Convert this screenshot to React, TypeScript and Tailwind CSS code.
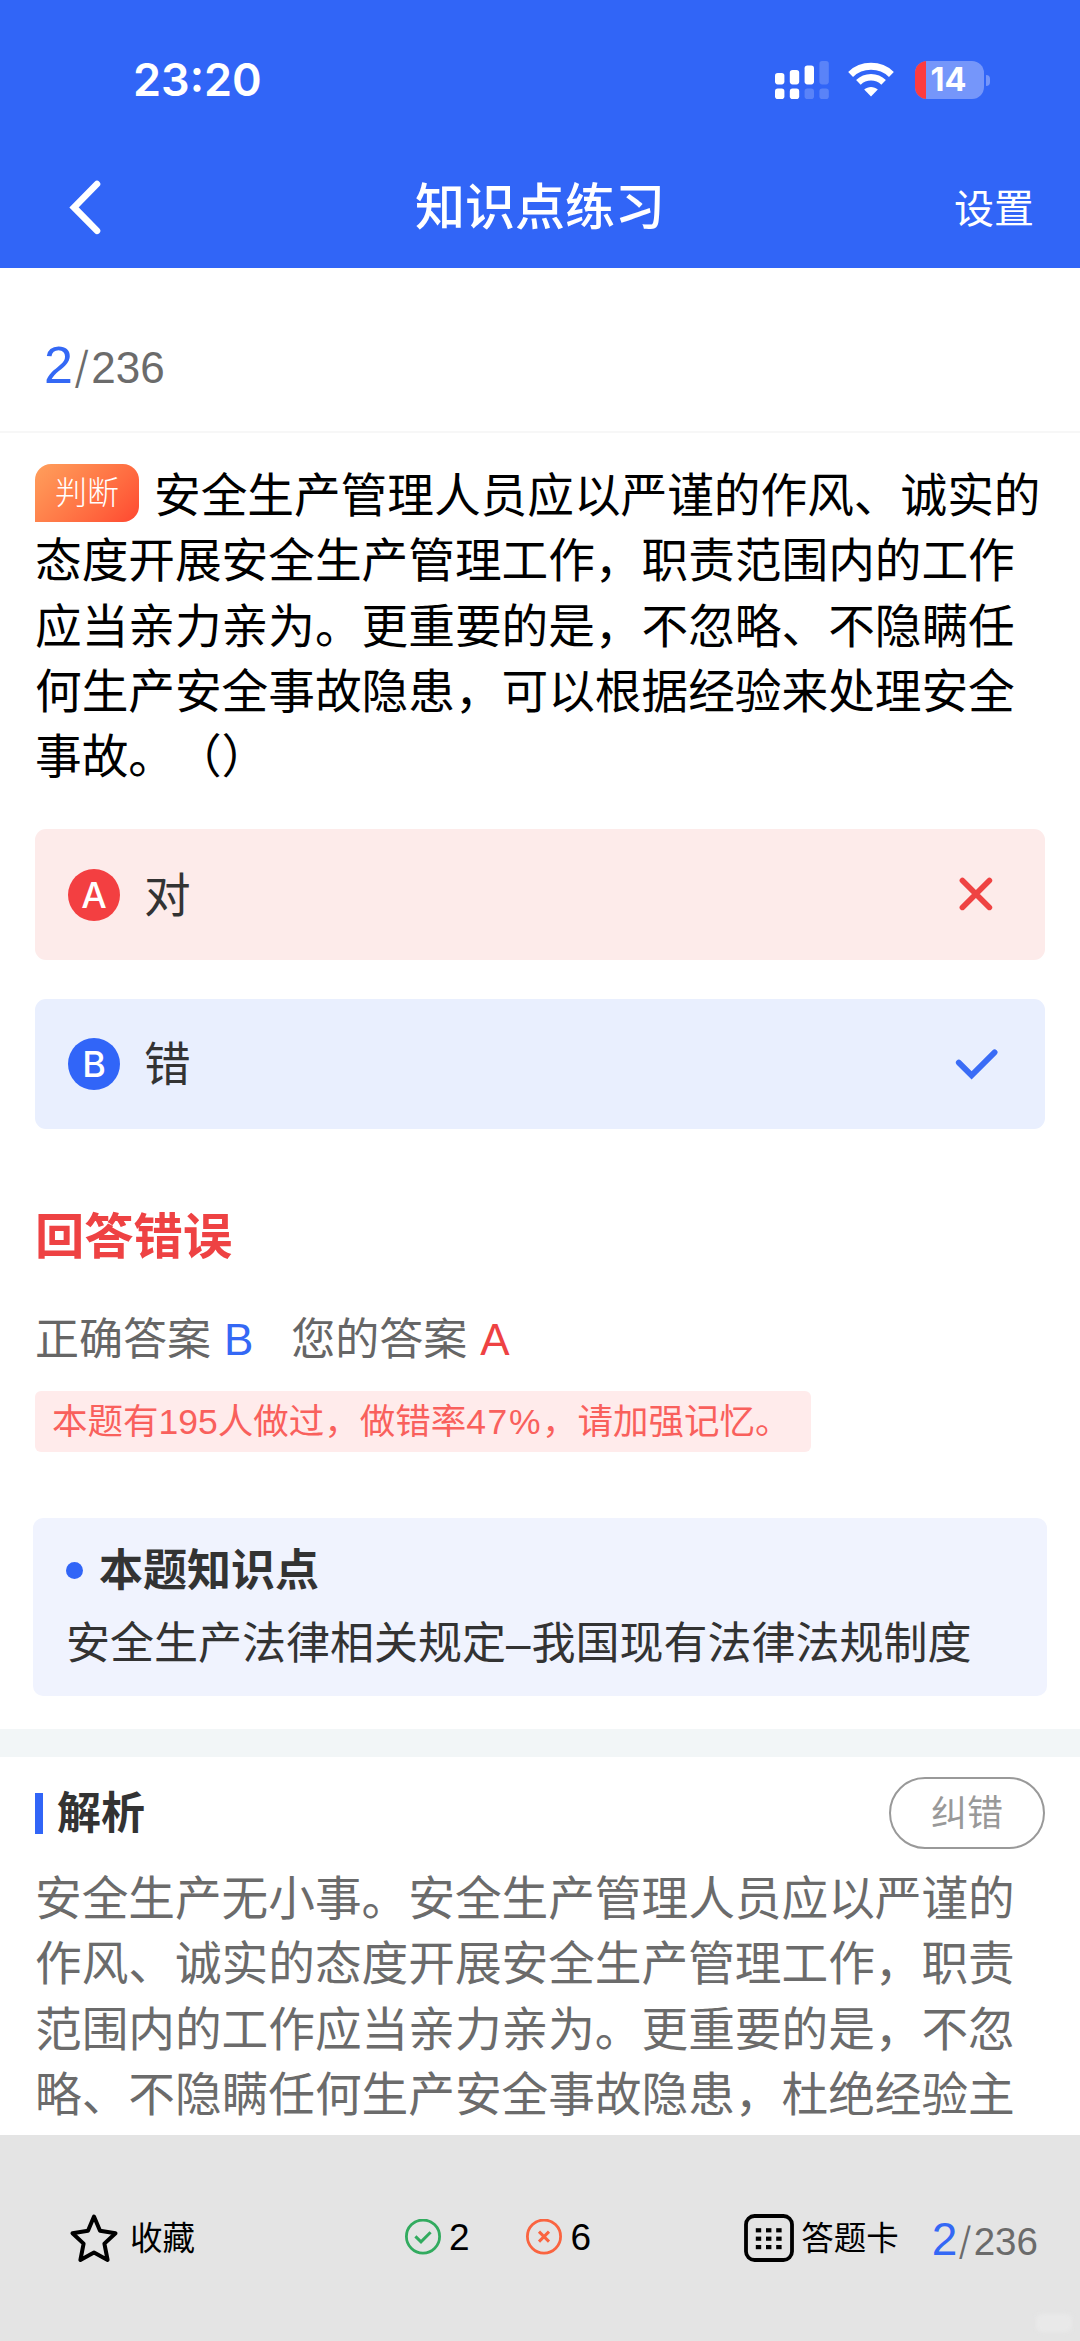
import React from "react";

function SignalIcon() {
  return (
    <svg width="54" height="40" viewBox="0 0 54 40" fill="#fff">
      <rect x="0" y="13" width="9.4" height="11.4" rx="2.8" />
      <rect x="14.8" y="10" width="9.4" height="14.4" rx="2.8" />
      <rect x="29.6" y="5.6" width="9.4" height="18.8" rx="2.8" />
      <rect x="44.4" y="1" width="9.4" height="23.4" rx="2.8" opacity=".2" />
      <rect x="0" y="28.6" width="9.4" height="10.4" rx="2.8" />
      <rect x="14.8" y="28.6" width="9.4" height="10.4" rx="2.8" />
      <rect x="29.6" y="28.6" width="9.4" height="10.4" rx="2.8" opacity=".2" />
      <rect x="44.4" y="28.6" width="9.4" height="10.4" rx="2.8" opacity=".2" />
    </svg>
  );
}

function WifiIcon() {
  return (
    <svg width="46" height="36" viewBox="0 0 46 36" fill="none">
      <path d="M2.6 12.4C13.8 1.6 32.2 1.6 43.4 12.4" stroke="#fff" strokeWidth="7" />
      <path d="M10.4 20.4C17.4 13.6 28.6 13.6 35.6 20.4" stroke="#fff" strokeWidth="6.6" />
      <path d="M16.2 27.6C20 24 26 24 29.8 27.6L23 34.6Z" fill="#fff" />
    </svg>
  );
}

function Battery() {
  return (
    <div className="flex items-center">
      <div className="flex h-[38px] w-[69px] overflow-hidden rounded-[12px] bg-[#7596fa]">
        <div className="h-full w-[11px] bg-[#fd3b3f]" />
        <span className="w-[45px] text-center font-[Inter] text-[32.5px] leading-[38px] font-bold text-white">
          14
        </span>
      </div>
      <div className="ml-[2px] h-[11px] w-[4px] rounded-r-full bg-[#7596fa]" />
    </div>
  );
}

type OptionProps = { letter: string; text: string; correct: boolean };

function Option({ letter, text, correct }: OptionProps) {
  return (
    <div
      className={
        correct
          ? "flex h-[130px] items-center rounded-[11px] bg-[#e9effe] pl-[33px]"
          : "flex h-[131px] items-center rounded-[11px] bg-[#fdebea] pl-[33px]"
      }
    >
      <span
        className={
          correct
            ? "flex size-[52px] items-center justify-center rounded-full bg-[#3165f8] font-[Inter] text-[36px] font-medium text-white"
            : "flex size-[52px] items-center justify-center rounded-full bg-[#f33f41] font-[Inter] text-[36px] font-medium text-white"
        }
      >
        {letter}
      </span>
      <span className="ml-[24px] pt-[2px] text-[46.67px] leading-[60px] text-[#333]">{text}</span>
      {correct ? (
        <svg className="mr-[45px] ml-auto" width="46" height="40" viewBox="0 0 46 40" fill="none" stroke="#3a6cf6" strokeWidth="5.8" strokeLinecap="round">
          <path d="M4.8 18.6L17.6 31.4L40.6 8.4" />
        </svg>
      ) : (
        <svg className="mr-[49px] ml-auto" width="40" height="40" viewBox="0 0 40 40" fill="none" stroke="#ef4343" strokeWidth="5.6" strokeLinecap="round">
          <path d="M6.4 5.4L33.4 32.4M33.4 5.4L6.4 32.4" />
        </svg>
      )}
    </div>
  );
}

export default function App() {
  return (
    <div className="flex h-[2341px] w-[1080px] flex-col overflow-hidden bg-white font-['Liberation_Sans','Noto_Sans_CJK_SC',sans-serif] [text-spacing-trim:space-all]">
      <header className="h-[268px] shrink-0 bg-[#3165f7] text-white">
        <div className="flex h-[160px] items-center pl-[133px]">
          <span className="w-[642px] font-[Inter] text-[45px] leading-[60px] font-semibold">23:20</span>
          <SignalIcon />
          <div className="ml-[19px]">
            <WifiIcon />
          </div>
          <div className="ml-[21px]">
            <Battery />
          </div>
        </div>
        <div className="grid h-[94px] grid-cols-[1fr_auto_1fr] items-center">
          <svg className="ml-[65px]" width="40" height="60" viewBox="0 0 40 60" fill="none" stroke="#fff" strokeWidth="6.6" strokeLinecap="round">
            <path d="M32 7L9 30.4L32 53.8" />
          </svg>
          <h1 className="pt-[2px] text-[50px] leading-[60px] font-medium">知识点练习</h1>
          <span className="mt-[4px] mr-[46px] justify-self-end text-[40px] leading-[50px]">设置</span>
        </div>
      </header>

      <div className="flex h-[165px] shrink-0 items-baseline border-b-2 border-[#f7f7f7] pt-[67px] pl-[44px]">
        <span className="text-[52px] leading-[60px] text-[#3468f5]">2</span>
        <span className="text-[44px] leading-[60px] text-[#6b6b6b]">
          <span className="mr-[2px] ml-px font-[Inter] font-light">/</span>236
        </span>
      </div>

      <main className="flex grow flex-col">
        <section className="flex flex-col px-[35px] pt-[31px]">
          <p className="h-[327px] text-[46.67px] leading-[65.33px] text-black">
            <span className="mr-[15px] inline-flex h-[58px] w-[104px] items-center justify-center rounded-[16px] rounded-bl-none bg-linear-135 from-[#ff9f5c] to-[#ff4630] align-top text-[32px] leading-[40px] font-light text-white">
              判断
            </span>
            安全生产管理人员应以严谨的作风、诚实的态度开展安全生产管理工作，职责范围内的工作应当亲力亲为。更重要的是，不忽略、不隐瞒任何生产安全事故隐患，可以根据经验来处理安全事故。（）
          </p>
          <div className="mt-[38px] flex flex-col gap-[39px]">
            <Option letter="A" text="对" correct={false} />
            <Option letter="B" text="错" correct />
          </div>
          <h2 className="mt-[78px] text-[49.3px] leading-[60px] font-bold text-[#ee4243]">回答错误</h2>
          <div className="mt-[43px] flex text-[44px] leading-[60px] text-[#666]">
            <span>正确答案</span>
            <span className="ml-[13px] text-[#3468f5]">B</span>
            <span className="ml-[38px]">您的答案</span>
            <span className="ml-[13px] text-[#ee4243]">A</span>
          </div>
          <div className="mt-[21px] h-[61px] w-[776px] rounded-[6px] bg-[#ffebeb] pt-px pl-[17px] text-[35.5px] leading-[61px] whitespace-nowrap text-[#f9605c]">
            本题有195人做过，做错率<span className="tracking-[1.6px]">47%</span>，请加强记忆。
          </div>
        </section>

        <section className="mx-[33px] mt-[66px] h-[178px] rounded-[10px] bg-[#f0f3fe] px-[33px] pt-[22px] text-[44px] text-[#333]">
          <div className="flex items-center">
            <span className="size-[17px] rounded-full bg-[#3165f7]" />
            <h3 className="ml-[16px] pt-px leading-[60px] font-bold">本题知识点</h3>
          </div>
          <p className="mt-[13px] leading-[60px]">安全生产法律相关规定<span className="mr-px">–</span>我国现有法律法规制度</p>
        </section>

        <div className="mt-[33px] h-[28px] bg-[#f2f6f7]" />

        <section className="px-[35px] pt-[20px]">
          <div className="flex h-[72px] items-center">
            <span className="h-[41px] w-[8px] bg-[#3165f7]" />
            <h3 className="ml-[14px] pt-[2px] text-[44px] leading-[60px] font-bold text-[#333]">解析</h3>
            <button className="ml-auto h-[72px] w-[156px] rounded-full border-[2.5px] border-[#999] pt-px text-[36px] leading-[60px] text-[#999]">
              纠错
            </button>
          </div>
          <p className="mt-[18px] text-[46.67px] leading-[65.33px] text-[#6b6b6b]">
            安全生产无小事。安全生产管理人员应以严谨的作风、诚实的态度开展安全生产管理工作，职责范围内的工作应当亲力亲为。更重要的是，不忽略、不隐瞒任何生产安全事故隐患，杜绝经验主
          </p>
        </section>
      </main>

      <footer className="relative flex h-[206px] shrink-0 items-center bg-[#e4e4e4] pl-[66px] text-[32.5px] text-black">
        <svg width="56" height="56" viewBox="0 0 56 56" fill="none" stroke="#000" strokeWidth="4" strokeLinejoin="round">
          <path d="M28 6.5L34 20.8L49.5 23.2L38.4 33.6L41.6 50L28 42.6L14.4 50L17.6 33.6L6.5 23.2L22 20.8Z" />
        </svg>
        <span className="ml-[8px] pt-[2px] leading-[40px]">收藏</span>
        <svg className="ml-[209px]" width="38" height="38" viewBox="0 0 38 38" fill="none" stroke="#32ab5f" strokeWidth="2.8">
          <circle cx="19" cy="17.6" r="16.6" />
          <path d="M11.4 17.4L17 22.8L26.6 13.2" strokeWidth="3" />
        </svg>
        <span className="ml-[7px] text-[37px] leading-[40px]">2</span>
        <svg className="ml-[55px]" width="38" height="38" viewBox="0 0 38 38" fill="none" stroke="#fa6440" strokeWidth="2.8">
          <circle cx="19" cy="17.6" r="16.6" />
          <path d="M14 12.6L24 22.6M24 12.6L14 22.6" strokeWidth="3" />
        </svg>
        <span className="ml-[8px] text-[37px] leading-[40px]">6</span>
        <svg className="ml-[152px]" width="52" height="50" viewBox="0 0 52 50">
          <rect x="3" y="3" width="46" height="44" rx="8.5" fill="none" stroke="#000" strokeWidth="3.8" />
          <g fill="#000">
            {[16, 24.4, 32.8].map((y) =>
              [12.8, 23, 33.2].map((x) => <rect key={`${x}-${y}`} x={x} y={y - 0.8} width="5.4" height="4.2" />)
            )}
          </g>
        </svg>
        <span className="ml-[6px] pt-[2px] leading-[40px]">答题卡</span>
        <div className="ml-[33px] flex items-baseline pt-[5px] leading-[60px]">
          <span className="text-[46px] text-[#3468f5]">2</span>
          <span className="text-[38.5px] text-[#6b6b6b]">
            <span className="mr-[2px] ml-px font-[Inter] font-light">/</span>236
          </span>
        </div>
        <div className="absolute right-[8px] bottom-[9px] h-[18px] w-[36px] rounded-[6px] bg-[#e9e9e9] blur-[2px]" />
      </footer>
    </div>
  );
}
